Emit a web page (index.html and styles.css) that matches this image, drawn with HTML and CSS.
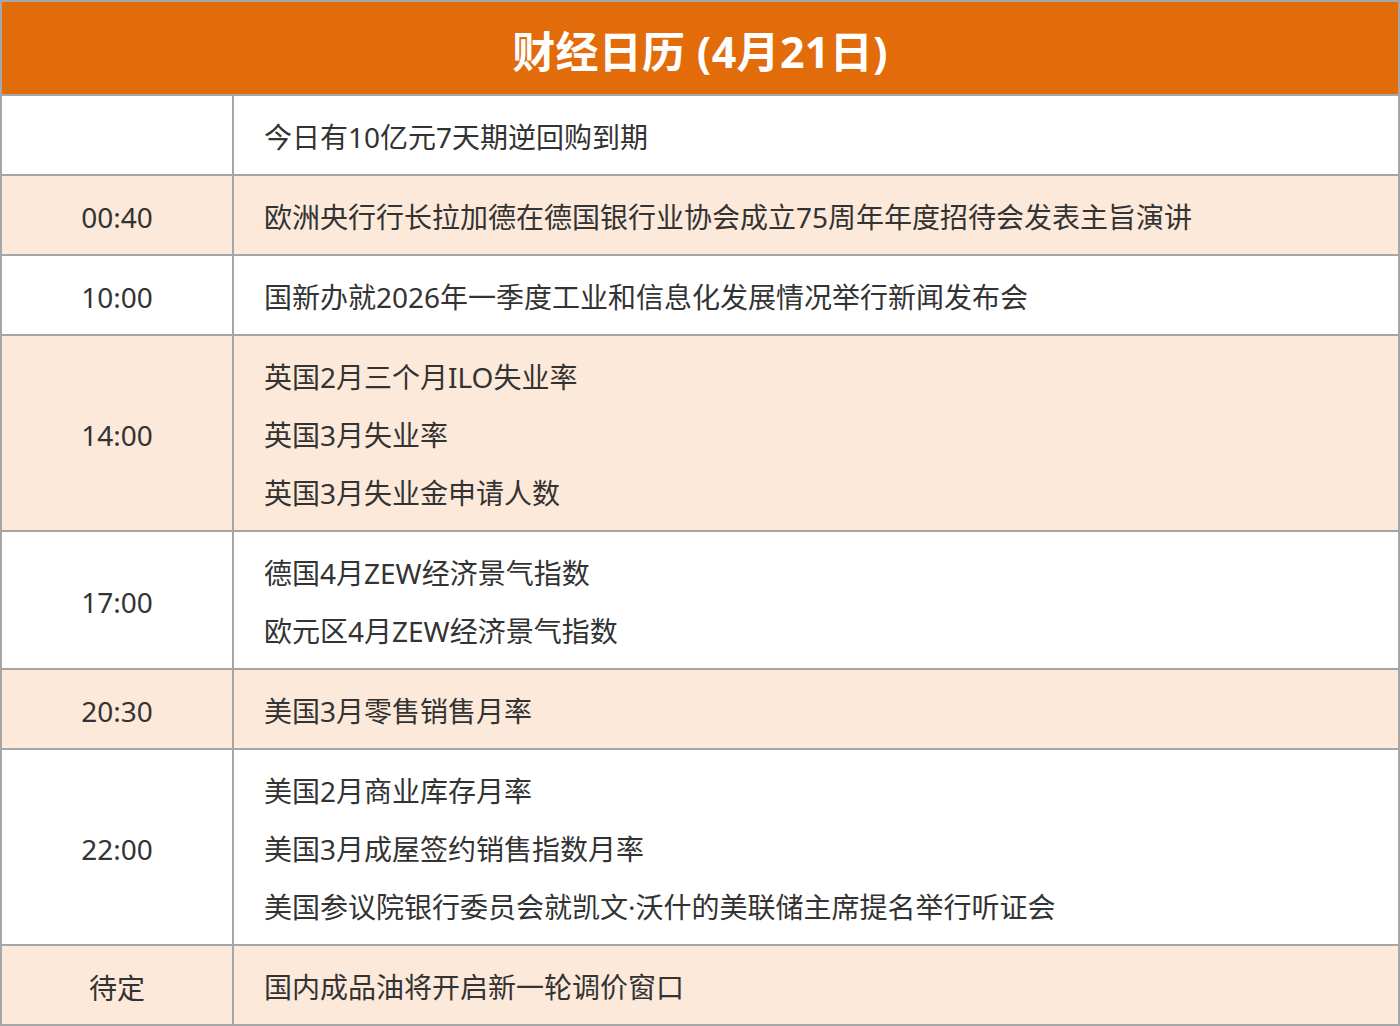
FILE: index.html
```html
<!DOCTYPE html>
<html lang="zh-CN">
<head>
<meta charset="utf-8">
<title>财经日历</title>
<link rel="stylesheet" href="styles.css">
</head>
<body>
<table class="cal">
  <colgroup>
    <col class="col-time">
    <col class="col-events">
  </colgroup>
  <thead>
    <tr><th colspan="2" class="title">财经日历 (4月21日)</th></tr>
  </thead>
  <tbody>
    <tr class="odd">
      <td class="time"></td>
      <td class="events"><div class="ev">今日有10亿元7天期逆回购到期</div></td>
    </tr>
    <tr class="even">
      <td class="time">00:40</td>
      <td class="events"><div class="ev">欧洲央行行长拉加德在德国银行业协会成立75周年年度招待会发表主旨演讲</div></td>
    </tr>
    <tr class="odd">
      <td class="time">10:00</td>
      <td class="events"><div class="ev">国新办就2026年一季度工业和信息化发展情况举行新闻发布会</div></td>
    </tr>
    <tr class="even">
      <td class="time">14:00</td>
      <td class="events">
        <div class="ev">英国2月三个月ILO失业率</div>
        <div class="ev">英国3月失业率</div>
        <div class="ev">英国3月失业金申请人数</div>
      </td>
    </tr>
    <tr class="odd">
      <td class="time">17:00</td>
      <td class="events">
        <div class="ev">德国4月ZEW经济景气指数</div>
        <div class="ev">欧元区4月ZEW经济景气指数</div>
      </td>
    </tr>
    <tr class="even">
      <td class="time">20:30</td>
      <td class="events"><div class="ev">美国3月零售销售月率</div></td>
    </tr>
    <tr class="odd">
      <td class="time">22:00</td>
      <td class="events">
        <div class="ev">美国2月商业库存月率</div>
        <div class="ev">美国3月成屋签约销售指数月率</div>
        <div class="ev">美国参议院银行委员会就凯文·沃什的美联储主席提名举行听证会</div>
      </td>
    </tr>
    <tr class="even">
      <td class="time">待定</td>
      <td class="events"><div class="ev">国内成品油将开启新一轮调价窗口</div></td>
    </tr>
  </tbody>
</table>
</body>
</html>
```
FILE: styles.css
```css
html, body {
  margin: 0;
  padding: 0;
  background: #ffffff;
}
body {
  font-family: "Noto Sans", "Noto Sans CJK SC", sans-serif;
  color: #333333;
}
.cal {
  width: 1400px;
  border-collapse: collapse;
  table-layout: fixed;
}
.col-time {
  width: 232px;
}
.cal th, .cal td {
  border: 2px solid #a6a6a6;
  padding: 0;
}
.title {
  background: #e26b0a;
  color: #ffffff;
  height: 90px;
  font-size: 43px;
  font-weight: 700;
  text-align: center;
  vertical-align: middle;
  letter-spacing: 0.3px;
  padding-top: 2px !important;
}
.time {
  text-align: center;
  vertical-align: middle;
  font-size: 28px;
  padding-top: 4px !important;
}
.events {
  padding: 12px 30px 8px !important;
  font-size: 28px;
  vertical-align: middle;
}
.ev {
  line-height: 58px;
  white-space: nowrap;
}
.odd td {
  background: #ffffff;
}
.even td {
  background: #fce9da;
}
```
